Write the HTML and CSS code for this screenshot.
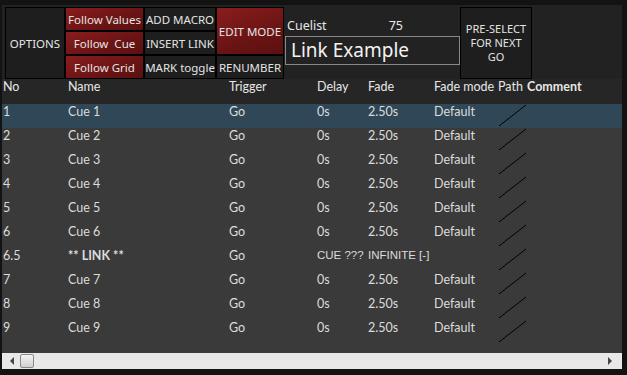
FILE: index.html
```html
<!DOCTYPE html>
<html lang="en">

<head>
  <meta charset="UTF-8">
  <title>Cuelist - Link Example</title>
  <link rel="stylesheet" href="styles.css">
</head>

<body>

  <div class="window">
    <div class="toolbar">
      <div class="btn options">OPTIONS</div>

      <div class="stack">
        <div class="btn red">Follow Values</div>
        <div class="btn red">Follow&nbsp; Cue</div>
        <div class="btn red">Follow Grid</div>
      </div>

      <div class="stack">
        <div class="btn">ADD MACRO</div>
        <div class="btn">INSERT LINK</div>
        <div class="btn">MARK toggle</div>
      </div>

      <div class="stack edit">
        <div class="btn red big">EDIT MODE</div>
        <div class="btn">RENUMBER</div>
      </div>

      <div class="cuelist">
        <div class="cuelist-head">
          <span>Cuelist</span>
          <span class="num">75</span>
        </div>
        <div class="name-box">Link Example</div>
      </div>

      <div class="btn preselect">PRE-SELECT<br>FOR NEXT<br>GO</div>
    </div>

    <div class="table">
      <div class="row head">
        <span>No</span>
        <span>Name</span>
        <span>Trigger</span>
        <span>Delay</span>
        <span>Fade</span>
        <span>Fade mode</span>
        <span>Path</span>
        <span class="bold">Comment</span>
      </div>
      <div id="rows"></div>
    </div>

    <div class="hscroll">
      <span class="arrow left"></span>
      <span class="thumb"></span>
      <span class="track"></span>
      <span class="arrow right"></span>
    </div>
  </div>

  <script>
    const cues = [
      ['1', 'Cue 1', 'Go', '0s', '2.50s', 'Default'],
      ['2', 'Cue 2', 'Go', '0s', '2.50s', 'Default'],
      ['3', 'Cue 3', 'Go', '0s', '2.50s', 'Default'],
      ['4', 'Cue 4', 'Go', '0s', '2.50s', 'Default'],
      ['5', 'Cue 5', 'Go', '0s', '2.50s', 'Default'],
      ['6', 'Cue 6', 'Go', '0s', '2.50s', 'Default'],
      ['6.5', '** LINK **', 'Go', 'CUE ???', 'INFINITE [-]', ''],
      ['7', 'Cue 7', 'Go', '0s', '2.50s', 'Default'],
      ['8', 'Cue 8', 'Go', '0s', '2.50s', 'Default'],
      ['9', 'Cue 9', 'Go', '0s', '2.50s', 'Default'],
    ]
    const rows = document.getElementById('rows')
    const pathSvg = '<svg width="30" height="24" viewBox="0 0 30 24"><line x1="1" y1="23" x2="28" y2="2" stroke="#000" stroke-width="1"/></svg>'

    cues.forEach((cue, i) => {
      const row = document.createElement('div')
      row.className = 'row' + (i === 0 ? ' selected' : '') + (cue[0] === '6.5' ? ' link' : '')
      cue.forEach(text => {
        const cell = document.createElement('span')
        cell.textContent = text
        row.appendChild(cell)
      })
      const path = document.createElement('span')
      path.className = 'path'
      path.innerHTML = pathSvg
      row.appendChild(path)
      row.appendChild(document.createElement('span'))
      rows.appendChild(row)
    })
  </script>

</body>

</html>
```

FILE: styles.css
```css
body {
  margin: 0;
  background-color: #131313;
  font-family: 'Noto Sans', sans-serif;
  font-size: 12px;
  color: #dcdcdc;
  height: 375px;
  overflow: hidden;
}

.window {
  margin: 5px 0 0 2px;
  width: 620px;
  height: 364px;
  background-color: #222;
  display: flex;
  flex-direction: column;
}

/* top buttons */

.toolbar {
  display: flex;
  height: 74px;
  padding: 2px 0 0 3px;
  box-sizing: border-box;
}

.btn {
  box-sizing: border-box;
  border: 1px solid #000;
  background-color: #1e1e1e;
  color: #e4e4e4;
  display: flex;
  align-items: center;
  justify-content: center;
  text-align: center;
  white-space: nowrap;
  font-size: 11.5px;
}

.btn.red {
  background: linear-gradient(160deg, #8a1d1d, #6a1414 60%, #5c1010);
}

.options {
  width: 60px;
  height: 72px;
}

.stack {
  display: flex;
  flex-direction: column;
}

.stack .btn {
  height: 24px;
  width: 79px;
}

.stack:nth-child(3) .btn {
  width: 72px;
}

.edit .btn {
  width: 68px;
}

.edit .btn.big {
  height: 48px;
}

.cuelist {
  width: 175px;
  padding: 12px 0 0 1px;
}

.cuelist-head {
  display: flex;
  padding-left: 2px;
  font-size: 12.5px;
  line-height: 14px;
  color: #e8e8e8;
}

.cuelist-head .num {
  margin-left: 62px;
}

.name-box {
  margin-top: 3px;
  height: 29px;
  box-sizing: border-box;
  border: 1px solid #888;
  padding-left: 5px;
  font-size: 19px;
  line-height: 27px;
  color: #f2f2f2;
}

.preselect {
  width: 72px;
  height: 72px;
  white-space: normal;
  font-size: 11px;
  line-height: 14px;
}

/* cue table */

.table {
  flex: 1;
  background-color: #3a3a3a;
  font-family: Lato, 'Noto Sans', sans-serif;
  font-size: 12.5px;
}

.row {
  display: grid;
  grid-template-columns: 65px 161px 88px 51px 66px 64px 29px 1fr;
  height: 24px;
  padding-left: 1px;
  line-height: 15px;
}

.row span {
  white-space: nowrap;
}

.row.head {
  background-color: #262626;
  height: 25px;
  color: #e6e6e6;
  line-height: 16px;
}

.bold {
  font-weight: bold;
}

.row.selected {
  background-color: #2f4757;
}

.row.link span:nth-child(2) {
  font-weight: bold;
}

.row.link span:nth-child(4),
.row.link span:nth-child(5) {
  font-family: 'Liberation Sans', sans-serif;
  font-size: 11.5px;
}

.path svg {
  display: block;
  margin-top: -1px;
  overflow: visible;
}

/* scrollbar */

.hscroll {
  height: 16px;
  background-color: #e8e8e8;
  display: flex;
  align-items: center;
  padding: 0 6px;
}

.arrow {
  width: 0;
  height: 0;
  border-top: 4px solid transparent;
  border-bottom: 4px solid transparent;
}

.arrow.left {
  border-right: 4px solid #444;
  margin-left: 2px;
}

.arrow.right {
  border-left: 4px solid #444;
  margin-right: 4px;
}

.thumb {
  width: 14px;
  height: 14px;
  box-sizing: border-box;
  margin-left: 6px;
  border: 1px solid #8a8a8a;
  border-radius: 2px;
  background: linear-gradient(#f4f4f4, #cfcfcf);
}

.track {
  flex: 1;
}
```
